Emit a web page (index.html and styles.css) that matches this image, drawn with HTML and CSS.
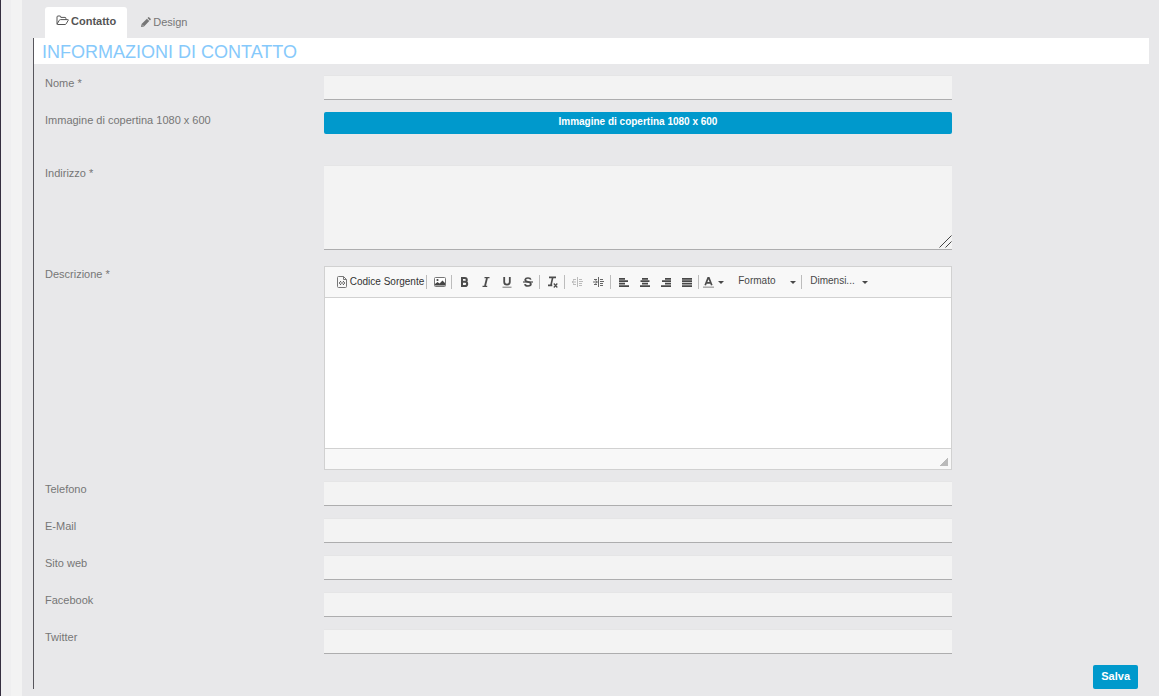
FILE: index.html
```html
<!DOCTYPE html>
<html lang="it">
<head>
<meta charset="utf-8">
<title>Informazioni di contatto</title>
<meta name="viewport" content="width=device-width, initial-scale=1">
<link rel="stylesheet" href="styles.css">
</head>
<body>
<div class="shell">
  <div class="rail"></div>
  <main class="page">
    <nav class="tabs">
      <a class="tab tab-active" href="#contatto">
        <svg class="tab-icon" width="13" height="11" viewBox="0 0 13 11" fill="none" stroke="currentColor" stroke-linejoin="round"><path d="M1 8.8V2Q1 1 2 1H4Q4.8 1 4.8 2V2.4H9Q9.9 2.4 9.9 3.3V4.6M1 9.2L3.3 5.2Q3.7 4.6 4.4 4.6H11.8Q12.6 4.6 12.2 5.3L10.2 8.8Q9.8 9.5 9 9.5H1.5Q1 9.5 1 8.8"/></svg>
        Contatto
      </a>
      <a class="tab" href="#design">
        <svg class="tab-icon" width="10" height="10" viewBox="0 0 10 10" fill="currentColor"><path d="M0 10L.6 7L5.9 1.7L8.3 4.1L3 9.4ZM6.5 1.1L7.3.3Q7.8-.1 8.3.4L9.6 1.7Q10.1 2.2 9.6 2.7L8.9 3.5Z"/><path d="M1.3 7.8L2.2 8.7" stroke="#e8e8ea" stroke-width=".8"/></svg>
        Design
      </a>
    </nav>
    <form class="panel" id="contatto">
      <h1 class="panel-title">INFORMAZIONI DI CONTATTO</h1>
      <div class="fields">
        <div class="row">
          <label class="label" for="nome">Nome *</label>
          <input class="input" id="nome" type="text">
        </div>
        <div class="row row-cover">
          <label class="label" for="copertina">Immagine di copertina 1080 x 600</label>
          <button class="btn btn-cover" id="copertina" type="button">Immagine di copertina 1080 x 600</button>
        </div>
        <div class="row row-area">
          <label class="label" for="indirizzo">Indirizzo *</label>
          <div class="area-wrap">
            <textarea class="input area" id="indirizzo"></textarea>
            <svg class="area-grip" width="13" height="13" viewBox="0 0 13 13" stroke="#444" fill="none"><path d="M.5 12.5L12.5.5M6.5 12.5L12.5 6.5"/></svg>
          </div>
        </div>
        <div class="row row-editor">
          <label class="label" for="descrizione">Descrizione *</label>
          <div class="editor">
            <div class="toolbar" role="toolbar" aria-label="Formattazione">
              <button class="tool tool-source" type="button">
                <svg width="10" height="12" viewBox="0 0 10 12" fill="none" stroke="#777"><path d="M.5 1.5Q.5.5 1.5.5H6.5L9.5 3.5V10.5Q9.5 11.5 8.5 11.5H1.5Q.5 11.5.5 10.5ZM6.5.5V3.5H9.5"/><path d="M4 5L2.3 7L4 9M6 5L7.7 7L6 9M5 6V8" stroke="#555"/></svg>
                Codice Sorgente
              </button>
              <span class="sep"></span>
              <button class="tool" type="button" aria-label="Immagine"><svg width="12" height="10" viewBox="0 0 12 10"><rect x=".5" y=".5" width="11" height="9" rx="1" fill="#fff" stroke="#777"/><path d="M1 8.5V7L3.5 5L5.5 6.5L8.5 3.5L11 6V8.5Z" fill="#444"/><circle cx="3.5" cy="3" r="1.1" fill="#444"/></svg></button>
              <span class="sep"></span>
              <button class="tool" type="button" aria-label="Grassetto"><svg width="9" height="10" viewBox="0 0 9 10" fill="none" stroke="#4c4c4c" stroke-width="2"><path d="M2 1H4.8Q6.8 1 6.8 2.9Q6.8 4.8 4.8 4.8H2H5Q7.2 4.8 7.2 6.9Q7.2 9 5 9H2Z"/></svg></button>
              <button class="tool" type="button" aria-label="Corsivo"><svg width="8" height="10" viewBox="0 0 8 10" fill="none" stroke="#4c4c4c"><path d="M2.5.7H7.5M.5 9.3H5.2" stroke-width="1.3"/><path d="M5 1L3 9" stroke-width="1.8"/></svg></button>
              <button class="tool" type="button" aria-label="Sottolineato"><svg width="10" height="11" viewBox="0 0 10 11" fill="none" stroke="#4c4c4c"><path d="M2.2 0V5Q2.2 7.6 5 7.6T7.8 5V0" stroke-width="1.8"/><path d="M.5 10.2H9.5" stroke="#777"/></svg></button>
              <button class="tool" type="button" aria-label="Barrato"><svg width="10" height="10" viewBox="0 0 10 10" fill="none" stroke="#4c4c4c"><path d="M7.8 2.6Q7.4 1 5 1T2.2 2.8Q2.2 4.4 5 4.8T7.9 7.1Q7.9 9 5 9T1.9 7.2" stroke-width="1.7"/><path d="M0 5H10" stroke-width="1.2"/></svg></button>
              <span class="sep"></span>
              <button class="tool" type="button" aria-label="Rimuovi formattazione"><svg width="11" height="12" viewBox="0 0 11 12" fill="none" stroke="#4c4c4c"><path d="M2 1.4H9M5.7 1.5L4 9M1 9.4H5.3" stroke-width="1.6"/><path d="M6.8 7.5L10.3 11.5M10.3 7.5L6.8 11.5" stroke-width="1.2"/></svg></button>
              <span class="sep"></span>
              <button class="tool" type="button" aria-label="Riduci rientro" disabled><svg width="11" height="10" viewBox="0 0 11 10" fill="none" stroke="#bbb"><path d="M5.5 0V10M7 2.5H10M7 4.5H11M7 6.5H10M7 8.5H10M1 2.5H4M1 7.5H4M0 5H4M2 3.5L0 5L2 6.5"/></svg></button>
              <button class="tool" type="button" aria-label="Aumenta rientro"><svg width="11" height="10" viewBox="0 0 11 10" fill="none" stroke="#666"><path d="M5.5 0V10M7 2.5H10M7 4.5H11M7 6.5H10M7 8.5H10M1 2.5H4M1 7.5H4M0 5H4M2.5 3.5L4.5 5L2.5 6.5"/></svg></button>
              <span class="sep"></span>
              <button class="tool" type="button" aria-label="Allinea a sinistra"><svg width="10" height="9" viewBox="0 0 10 9" stroke="#484848" stroke-width="1.7"><path d="M0 .8H6M0 3.2H9M0 5.6H6M0 8.1H10"/></svg></button>
              <button class="tool" type="button" aria-label="Centra"><svg width="10" height="9" viewBox="0 0 10 9" stroke="#484848" stroke-width="1.7"><path d="M2 .8H8M.5 3.2H9.5M2 5.6H8M0 8.1H10"/></svg></button>
              <button class="tool" type="button" aria-label="Allinea a destra"><svg width="10" height="9" viewBox="0 0 10 9" stroke="#484848" stroke-width="1.7"><path d="M4 .8H10M1 3.2H10M4 5.6H10M0 8.1H10"/></svg></button>
              <button class="tool" type="button" aria-label="Giustifica"><svg width="10" height="9" viewBox="0 0 10 9" stroke="#484848" stroke-width="1.7"><path d="M0 .8H10M0 3.2H10M0 5.6H10M0 8.1H10"/></svg></button>
              <span class="sep"></span>
              <button class="tool tool-color" type="button" aria-label="Colore testo"><svg width="11" height="11" viewBox="0 0 11 11" fill="none" stroke="#4c4c4c"><path d="M2.2 8.2L5.1.9H5.9L8.8 8.2M3.3 5.8H7.7" stroke-width="1.7"/><path d="M0 10.2H11" stroke="#aaa" stroke-width="1.5"/></svg><span class="caret"></span></button>
              <span class="combo"><select class="combo-select" aria-label="Formato"><option>Formato</option></select><span class="caret combo-caret"></span></span>
              <span class="sep"></span>
              <span class="combo"><select class="combo-select" aria-label="Dimensione"><option>Dimensi...</option></select><span class="caret combo-caret"></span></span>
            </div>
            <textarea class="editor-body" id="descrizione"></textarea>
            <div class="editor-foot"><span class="editor-grip"></span></div>
          </div>
        </div>
        <div class="row">
          <label class="label" for="telefono">Telefono</label>
          <input class="input" id="telefono" type="tel">
        </div>
        <div class="row">
          <label class="label" for="email">E-Mail</label>
          <input class="input" id="email" type="email">
        </div>
        <div class="row">
          <label class="label" for="sito">Sito web</label>
          <input class="input" id="sito" type="url">
        </div>
        <div class="row">
          <label class="label" for="facebook">Facebook</label>
          <input class="input" id="facebook" type="text">
        </div>
        <div class="row">
          <label class="label" for="twitter">Twitter</label>
          <input class="input" id="twitter" type="text">
        </div>
      </div>
      <div class="actions"><button class="btn btn-save" type="submit">Salva</button></div>
    </form>
  </main>
</div>
</body>
</html>
```
FILE: styles.css
```css
* { box-sizing: border-box; }

body {
  margin: 0;
  background: #e8e8ea;
  color: #767676;
  font: 11px/16px "Liberation Sans", Arial, sans-serif;
}

button, input, textarea, select { font: inherit; color: inherit; margin: 0; }

.shell { display: flex; min-height: 100vh; }

.rail {
  flex: none;
  width: 22px;
  border-left: 1px solid #352f40;
  background: linear-gradient(90deg, #efeff0 50%, #f3f3f3 50%);
}

.page { flex: 1; min-width: 0; padding: 7px 10px 7px 11px; }

/* Tabs */
.tabs { display: flex; align-items: flex-end; padding-left: 12px; }

.tab {
  display: flex;
  align-items: center;
  gap: 2px;
  height: 31px;
  padding: 0 14px 2px;
  color: #767676;
  text-decoration: none;
}

.tab-active {
  padding: 0 11px 4px;
  border-radius: 3px 3px 0 0;
  background: #fff;
  color: #555;
  font-weight: bold;
}

.tab-icon { flex: none; }

/* Panel */
.panel { border-left: 1px solid #57565c; }

.panel-title {
  margin: 0;
  padding: 2px 8px 0;
  background: #fff;
  color: #86c9fb;
  font-size: 18px;
  font-weight: normal;
  line-height: 24px;
}

.fields { display: flex; flex-direction: column; gap: 12px; padding: 11px 11px 0; }

.row {
  display: grid;
  grid-template-columns: repeat(12, minmax(0, 1fr));
  column-gap: 22px;
  align-items: start;
}

.row > :first-child { grid-column: span 3; }
.row > :last-child { grid-column: span 7; }

.row-cover { margin-bottom: 19px; }
.row-area { margin-bottom: 4px; }
.row-editor { margin-bottom: -1px; }

.input {
  display: block;
  width: 100%;
  height: 25px;
  padding: 2px 6px;
  border: 0;
  border-top: 1px solid #e5e5e6;
  border-bottom: 1px solid #adadae;
  border-radius: 0;
  background: #f3f3f3;
  outline: 0;
}

.area-wrap { position: relative; }
.area { height: 85px; resize: vertical; }
.area::-webkit-resizer { display: none; }
.area-grip { position: absolute; right: 0; bottom: 2px; pointer-events: none; }

/* Buttons */
.btn {
  border: 0;
  border-radius: 2px;
  background: #0099cc;
  color: #fff;
  font-size: 10px;
  font-weight: bold;
}

.btn-cover { height: 22px; padding: 0 8px 2px; }
.btn-save { height: 24px; padding: 0 8px 2px; font-size: 11px; }
.actions { display: flex; justify-content: flex-end; padding: 11px 11px 0; }

/* Rich text editor */
.editor { border: 1px solid #d1d1d1; background: #fff; }

.toolbar {
  display: flex;
  flex-wrap: wrap;
  align-items: center;
  min-height: 31px;
  padding: 0 8px;
  border-bottom: 1px solid #d1d1d1;
  background: #f8f8f8;
  color: #484848;
  font-size: 10px;
}

.tool {
  display: flex;
  align-items: center;
  justify-content: center;
  gap: 3px;
  width: 21px;
  height: 22px;
  padding: 0;
  border: 0;
  background: none;
}

.tool-source { width: auto; padding: 0 1px 0 4px; color: #333; }
.tool-color { width: 24px; gap: 4px; margin-right: 7px; }

.sep { width: 1px; height: 14px; margin: 0 2px 0 1px; background: #bcbcbc; }

.caret {
  border: 3px solid transparent;
  border-top: 3px solid #484848;
  border-bottom: 0;
}

.combo { position: relative; margin: 0 2px 0 1px; }

.combo-select {
  appearance: none;
  display: block;
  width: 65px;
  height: 22px;
  padding: 0 12px 2px 5px;
  border: 0;
  background: none;
}

.combo-caret { position: absolute; top: 10px; right: 2px; }

.editor-body {
  display: block;
  width: 100%;
  height: 150px;
  padding: 8px;
  border: 0;
  background: #fff;
  outline: 0;
  resize: none;
}

.editor-foot {
  display: flex;
  align-items: flex-end;
  justify-content: flex-end;
  height: 21px;
  padding: 3px;
  border-top: 1px solid #d1d1d1;
  background: #f8f8f8;
}

.editor-grip {
  width: 8px;
  height: 8px;
  background: linear-gradient(135deg, transparent 50%, #bababa 50%);
}
```
